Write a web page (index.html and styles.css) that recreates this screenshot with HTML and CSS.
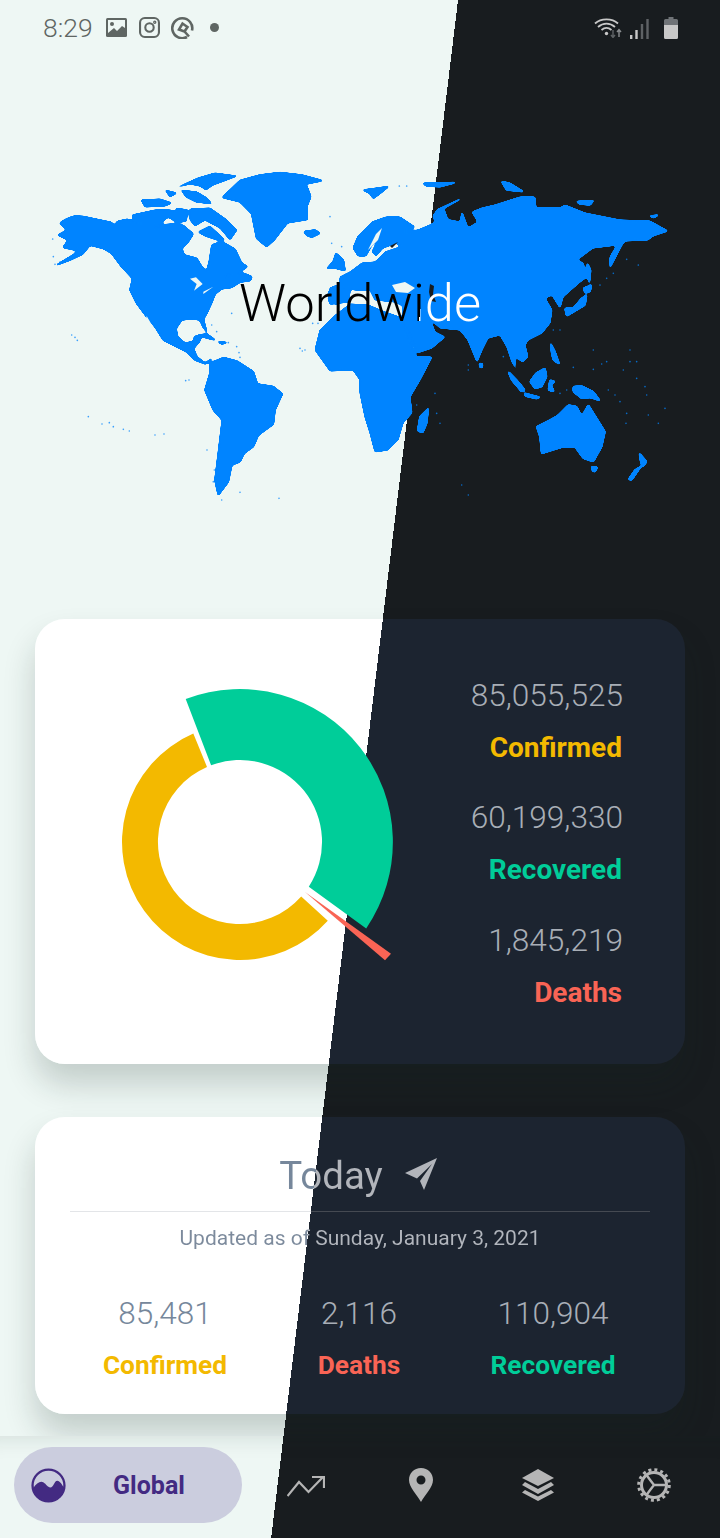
FILE: index.html
```html
<!DOCTYPE html>
<html lang="en">
<head>
<meta charset="utf-8">
<title>Worldwide</title>
<link rel="stylesheet" href="styles.css">
</head>
<body>
<div class="page">
  <header class="status">
    <span class="time">8:29</span>
    <svg class="st-img" viewBox="0 0 21 19"><rect width="21" height="19" rx="1.5" fill="#5f6663"/><path d="M2 2h17v8l-3-2-5 5-3-3-6 5z" fill="#eef7f4"/><circle cx="6" cy="6" r="2" fill="#5f6663"/></svg>
    <svg class="st-ig" viewBox="0 0 20 20" fill="none" stroke="#5f6663" stroke-width="2"><rect x="1" y="1" width="18" height="18" rx="4.5"/><circle cx="10" cy="10" r="4"/><circle cx="15" cy="5" r=".6"/></svg>
    <svg class="st-q" viewBox="0 0 23 23" fill="none" stroke="#5f6663"><path d="M16 21 A10 10 0 1 1 21 14.500" stroke-width="2.600"/><path d="M13.500 15.500 L8 13.500 L11.500 7.500 L16.500 11 L13.500 15.500 L18 20.500" stroke-width="2.600"/></svg>
    <span class="st-dot"></span>
    <span class="st-gap"></span>
    <svg class="st-wifi" viewBox="0 0 29 21" fill="none"><path d="M1 6.500 C7 1 18 1 24 6.500 M4 10 C9 5.500 16 5.500 21 10 M7.500 13 C10.500 10.500 14.500 10.500 17.500 13" stroke="#c8c8c8" stroke-width="1.800"/><circle cx="12.500" cy="16.500" r="1.700" fill="#c8c8c8"/><path d="M19 13v7m-2-2 2 2.500 2-2.500" stroke="#5e6265" stroke-width="1.400"/><path d="M25 20v-7m-2 2 2-2.500 2 2.500" stroke="#8a8d90" stroke-width="1.400"/></svg>
    <svg class="st-sig" viewBox="0 0 19 20" fill="#c8c8c8"><rect x="0" y="16" width="2.400" height="4"/><rect x="5.300" y="11" width="2.400" height="9"/><rect x="10.800" y="5" width="2.400" height="15" fill="#5e6265"/><rect x="16.300" y="0" width="2.400" height="20" fill="#5e6265"/></svg>
    <svg class="st-bat" viewBox="0 0 14 22"><path d="M4.500 0h5v2h3a1.500 1.500 0 0 1 1.500 1.500V8H0V3.500A1.500 1.500 0 0 1 1.500 2h3z" fill="#6f7377"/><path d="M0 8h14v12.500a1.500 1.500 0 0 1-1.500 1.500h-11A1.500 1.500 0 0 1 0 20.500z" fill="#c8c8c8"/></svg>
  </header>

  <section class="hero">
    <svg class="map" viewBox="30 160 660 350" fill="#0084ff" stroke="#0084ff" stroke-linejoin="round" stroke-width="1">
      <defs>
        <filter id="smooth" x="30" y="160" width="660" height="350" filterUnits="userSpaceOnUse" color-interpolation-filters="sRGB">
          <feGaussianBlur stdDeviation="1.2"/>
          <feComponentTransfer><feFuncA type="linear" slope="9" intercept="-3.400"/></feComponentTransfer>
        </filter>
      </defs>
      <g filter="url(#smooth)">
        <!-- americas and greenland, traced at 3x -->
        <g transform="translate(40 160) scale(.33333)" stroke-width="5">
          <path d="M60 190 Q75 176 105 168 L130 170 L165 177 L215 188 L222 200 L232 185 L262 178 L300 192 L330 192 L350 205 L365 195 L400 192 L430 197 L459 222 L445 245 L425 265 L432 285 L470 295 L485 320 L500 336 L508 305 L516 255 L545 245 L585 268 L605 310 L622 320 L600 335 L555 345 L550 360 L575 345 L610 340 L636 350 L630 362 L600 366 L575 382 L545 386 L525 402 L515 428 L500 460 L490 478 L500 515 L490 502 L480 480 L455 475 L425 480 L408 505 L412 530 L435 550 L460 545 L464 530 L485 525 L478 545 L460 565 L470 590 L495 610 L515 596 L497 612 L465 600 L440 575 L410 560 L370 540 L345 500 L320 470 L290 430 L270 390 L278 355 L245 320 L215 280 L190 265 L150 255 L128 282 L90 300 L50 315 L100 285 L125 262 L105 270 L70 262 L85 240 L55 225 L82 210Z"/>
          <path d="M510 610 L550 593 L590 603 L640 635 L652 672 L700 680 L727 702 L705 750 L700 792 L655 825 L640 860 L612 880 L600 905 L575 915 L565 965 L535 1005 L525 960 L535 880 L547 780 L520 750 L495 690 L510 640Z"/>
          <path d="M548 112 L600 62 L660 45 L720 38 L785 45 L846 62 L805 70 L740 70 L800 78 L812 110 L800 140 L802 178 L742 188 L702 240 L680 260 L650 235 L635 160 L600 125Z"/>
          <path d="M792 215 L825 210 L840 220 L815 232 L800 226Z M888 280 L910 300 L915 332 L880 322 L862 325 L880 305Z"/>
          <path d="M477 525 L500 522 L525 540 L495 532Z M535 545 L560 548 L545 552Z M880 390 L930 388 L925 425 L870 432 L865 398Z"/>
        </g>
        <!-- canadian arctic, page coordinates -->
        <path d="M178 187 L198 178 L215 173 L237 176 L224 181 L213 185 L206 190 L200 186 L190 184Z M181 190 L197 192 L207 198 L212 204 L196 202 L186 197Z M141 200 L160 199 L172 203 L165 206 L145 207Z M165 190 L177 193 L170 197Z M132 215 L155 210 L170 210 L178 212 L183 222 L176 222 L168 217 L160 225 L150 226 L134 222Z M190 209 L210 208 L227 220 L237 230 L230 240 L220 228 L205 220 L195 226 L190 220Z M176 208 L188 210 L186 222 L178 218Z M198 232 L210 226 L225 240 L217 240 L205 236Z"/>
        <!-- europe, africa, asia, page coordinates -->
        <path d="M328 300 L330 288 L340 284 L340 277 L350 272 L362 263 L375 262 L385 252 L400 247 L397 243 L383 248 L376 256 L372 252 L378 240 L387 232 L382 233 L372 245 L366 256 L358 256 L353 248 L358 236 L372 222 L386 217 L400 217 L415 227 L405 232 L418 230 L430 225 L435 222 L433 215 L440 218 L460 222 L462 212 L468 228 L478 222 L472 212 L482 208 L495 205 L520 197 L535 197 L536 208 L560 208 L565 205 L585 213 L595 215 L620 220 L650 221 L668 231 L653 236 L648 240 L625 241 L622 245 L610 268 L610 257 L617 245 L593 248 L577 260 L583 263 L587 277 L580 282 L563 297 L560 308 L552 295 L545 298 L552 310 L550 323 L542 333 L528 340 L525 345 L528 357 L523 362 L515 357 L515 367 L521 377 L512 362 L507 347 L500 335 L488 338 L482 350 L477 362 L468 340 L460 330 L440 328 L430 319 L435 332 L445 337 L432 348 L417 353 L410 335 L402 320 L413 350 L417 357 L432 357 L420 380 L410 397 L412 413 L403 423 L398 440 L388 450 L375 452 L370 433 L365 417 L360 393 L360 380 L353 370 L330 371 L315 350 L320 330 L333 317 L350 304 L368 305 L385 312 L402 318 L403 306 L395 302 L375 300 L370 290 L355 290 L345 288 L340 297 L338 305Z"/>
        <g transform="translate(360 160) scale(.33333)" stroke-width="5">
          <path d="M220 170 L232 150 L300 118 L250 145 L262 178 L232 185Z"/>
          <path d="M615 445 L620 468 L675 435 L680 405 L665 415 L640 445Z M670 385 L695 375 L690 395 L675 397Z M682 310 L692 330 L688 368 L682 345Z"/>
          <path d="M510 665 L528 640 L555 625 L560 650 L545 680 L525 685Z M445 635 L470 660 L495 690 L485 695 L455 660Z M495 700 L540 712 L530 716 L495 708Z M570 660 L585 665 L572 672 L582 695 L565 690Z M640 680 L665 678 L700 695 L720 722 L690 712 L665 715 L640 695Z M572 550 L585 575 L598 612 L580 600 L575 580Z"/>
          <path d="M530 800 L570 780 L592 768 L625 735 L650 740 L665 770 L685 735 L735 815 L725 860 L700 905 L670 895 L645 860 L610 860 L545 880 L540 830Z"/>
          <path d="M695 920 L712 922 L705 936 L697 932Z M838 880 L860 905 L848 920 L842 905Z M842 920 L815 960 L806 958 L825 930Z"/>
          <path d="M205 745 L200 790 L188 818 L173 812 L180 770Z M358 610 L368 612 L366 623 L360 622Z"/>
          <path d="M10 90 L50 85 L85 80 L60 100 L40 115 L30 100Z M190 70 L285 68 L240 80 L200 78Z M425 65 L450 70 L490 95 L440 90Z M650 125 L700 122 L690 135 L660 132Z M870 168 L895 165 L880 173Z"/>
        </g>
      </g>
      <!-- lakes and inland seas sit on top of the land -->
      <g transform="translate(40 160) scale(.33333)" fill="#eef7f4" stroke="none">
        <path d="M320 468 L350 520 L338 512 L318 478Z M468 352 L488 372 L462 392 L470 372 L450 356Z M490 395 L520 380 L490 402Z"/>
      </g>
      <path d="M392 285 L405 282 L415 288 L408 293 L396 292Z M376 234 L382 228 L378 240 L368 250Z" fill="#eef7f4" stroke="none"/>
      <path d="M430 284 L434 286 L433 294 L436 302 L431 301 L429 292Z M390 246 L398 242 L392 248Z" fill="#181c1f" stroke="none"/>
      <!-- tiny islands stay unfiltered -->
      <g transform="translate(40 160) scale(.33333)" fill="none" stroke-linecap="round" stroke-width="5" opacity=".75">
        <path d="M95 525h.01M105 532h.01M112 541h.01M145 770h.01M186 792h.01M208 788h.01M220 800h.01M250 808h.01M268 813h.01M345 825h.01M372 822h.01M437 662h.01M447 660h.01M501 870h.01M780 565h.01M795 570h.01M787 573h.01M818 490h.01M834 490h.01M45 313h.01M60 306h.01M80 298h.01M40 290h.01M515 495h.01M530 515h.01M565 548h.01M590 560h.01M597 578h.01M600 592h.01M523 930h.01M520 965h.01M545 1020h.01M600 997h.01M717 1015h.01M38 237h.01M575 460h.01M870 170h.01M875 250h.01M905 260h.01"/>
      </g>
      <g transform="translate(360 160) scale(.33333)" fill="none" stroke-linecap="round" stroke-width="5" opacity=".75">
        <path d="M640 622h.01M700 628h.01M740 605h.01M725 612h.01M810 570h.01M830 605h.01M790 630h.01M830 655h.01M855 680h.01M860 705h.01M780 725h.01M765 705h.01M745 690h.01M800 760h.01M865 765h.01M895 790h.01M915 745h.01M305 975h.01M325 1005h.01M430 590h.01M325 615h.01M325 630h.01M240 790h.01M230 760h.01M225 700h.01M170 735h.01M600 510h.01M580 510h.01M700 570h.01M810 605h.01M620 690h.01M600 700h.01M760 340h.01M740 355h.01M720 375h.01M800 298h.01M835 315h.01M798 790h.01M118 78h.01M140 78h.01"/>
      </g>
    </svg>
    <h1 class="title">Worldwide</h1>
  </section>

  <section class="card totals">
    <svg class="donut" viewBox="-120 -160 320 320">
      <path d="M87.800 78.800 A118 118 0 1 1 -46.700 -108.400 L-33 -75.100 A82 82 0 1 0 61.200 54.500Z" fill="#f3b900"/>
      <path d="M-54.300 -143 A153 153 0 0 1 126.200 86.400 L68.800 44.700 A82 82 0 0 0 -28.900 -76.700Z" fill="#00cd99"/>
      <path d="M65 50 L151 111.700 L145 118.300Z" fill="#f96455"/>
    </svg>
    <div class="stats">
      <p class="num">85,055,525</p><p class="lab yellow">Confirmed</p>
      <p class="num">60,199,330</p><p class="lab green">Recovered</p>
      <p class="num">1,845,219</p><p class="lab red">Deaths</p>
    </div>
  </section>

  <section class="card today">
    <div class="today-head">
      <h2 class="today-title">Today</h2>
      <svg class="plane" viewBox="0 0 34 34" fill="#b2b5bb"><path d="M33 1 L1 16 L13 21.500 L28 7 L16 24 L20 33Z"/></svg>
    </div>
    <div class="rule"></div>
    <p class="updated">Updated as of Sunday, January 3, 2021</p>
    <div class="cols">
      <div class="col"><p class="cnum slate">85,481</p><p class="clab yellow">Confirmed</p></div>
      <div class="col"><p class="cnum">2,116</p><p class="clab red">Deaths</p></div>
      <div class="col"><p class="cnum">110,904</p><p class="clab green">Recovered</p></div>
    </div>
  </section>

  <nav class="nav">
    <div class="pill">
      <svg class="globe" viewBox="0 0 36 36"><circle cx="18" cy="18" r="16.400" fill="none" stroke="#432a82" stroke-width="2.400"/><path d="M2 21 C6 15 10 13 13 15 C15.500 16.500 17 20 20 20 C23 20 24 13 27 13 C30 13 31.500 17 34 20 C33.500 28 26 34 18 34 C10 34 3 28 2 21Z" fill="#432a82"/></svg>
      <span class="pill-text">Global</span>
    </div>
    <div class="nav-item"><svg class="ni-trend" viewBox="0 0 38 21" fill="none" stroke="#b5b5b5" stroke-width="2.200"><path d="M0.500 20 L12 6 L21.500 16 L36 1 M25 1 H37 V12"/></svg></div>
    <div class="nav-item"><svg class="ni-pin" viewBox="0 0 24 34"><path fill-rule="evenodd" d="M12 0 C19 0 24 5 24 12 C24 19 16 27 12 34 C8 27 0 19 0 12 C0 5 5 0 12 0Z M12 7.500 A4.500 4.500 0 1 0 12 16.500 A4.500 4.500 0 1 0 12 7.500Z" fill="#b5b5b5"/></svg></div>
    <div class="nav-item"><svg class="ni-layers" viewBox="0 0 32 32" fill="#b5b5b5"><path d="M16 0 L32 9 L16 17 L0 9Z"/><path d="M3 13 L16 20 L29 13 L32 16 L16 25 L0 16Z"/><path d="M3 21 L16 27.500 L29 21 L32 23.500 L16 32 L0 23.500Z"/></svg></div>
    <div class="nav-item"><svg class="ni-gear" viewBox="0 0 34 34" fill="none" stroke="#b5b5b5"><circle cx="17" cy="17" r="12.500" stroke-width="3"/><circle cx="17" cy="17" r="15.300" stroke-width="3" stroke-dasharray="3 3"/><path d="M17 17 Q13 12 9.500 7 M17 17 H30 M17 17 Q13 22 9.500 27" stroke-width="2.400"/></svg></div>
  </nav>
</div>
</body>
</html>
```

FILE: styles.css
```css
* { box-sizing: border-box; margin: 0; padding: 0; }

html, body { height: 100%; }

body {
  width: 720px;
  overflow: hidden;
  font-family: Roboto, "Liberation Sans", sans-serif;
  background: linear-gradient(96.93deg, #eef7f4 454.7px, #181c1f 454.7px) fixed;
}

.page {
  display: flex;
  flex-direction: column;
  height: 1538px;
}

/* status bar */
.status {
  display: flex;
  align-items: center;
  height: 55px;
  padding: 0 41px 0 43px;
}
.time { font-size: 26.5px; font-weight: 300; color: #5f6663; width: 50px; margin-right: 13px; white-space: nowrap; }
.st-img { width: 21px; height: 19px; margin-right: 12px; }
.st-ig { width: 21px; height: 21px; margin-right: 11px; }
.st-q { width: 23px; height: 23px; margin-right: 16px; }
.st-dot { width: 9px; height: 9px; border-radius: 50%; background: #5f6663; }
.st-gap { flex: 1; }
.st-wifi { width: 29px; height: 21px; margin-right: 7px; }
.st-sig { width: 19px; height: 20px; margin-right: 15px; margin-top: 3px; }
.st-bat { width: 14px; height: 22px; margin-right: 1px; }

/* hero */
.hero {
  position: relative;
  height: 564px;
  padding: 105px 30px 0;
}
.map { display: block; width: 660px; height: 350px; }
.title {
  position: absolute;
  left: 0;
  right: 0;
  top: 215px;
  text-align: center;
  font-size: 52.5px;
  line-height: 66px;
  font-weight: 300;
  background: linear-gradient(96.93deg, #000 454.7px, #fff 454.7px) fixed;
  -webkit-background-clip: text;
  background-clip: text;
  color: transparent;
}

/* cards */
.card {
  margin: 0 35px;
  border-radius: 30px;
  background: linear-gradient(96.93deg, #fff 454.7px, #1c2430 454.7px) fixed;
  box-shadow: 0 20px 32px rgba(20, 40, 35, .2);
  position: relative;
}
.totals {
  display: flex;
  align-items: center;
  justify-content: space-between;
  height: 445px;
  padding: 0 62px 0 85px;
}
.donut { display: block; width: 320px; height: 320px; overflow: visible; }
.stats { text-align: right; margin-top: 5px; }
.num { font-size: 31.6px; line-height: 36px; font-weight: 300; color: #a8aeb6; margin-top: 34.5px; }
.num:first-child { margin-top: 0; }
.lab { font-size: 28px; line-height: 36px; font-weight: 700; margin-top: 16px; padding-right: 1px; }

.yellow { color: #f3b900; }
.green { color: #00cd99; }
.red { color: #f96455; }

.today { margin-top: 53px; height: 297px; padding: 0 35px; }
.today-head {
  display: flex;
  align-items: center;
  justify-content: center;
  gap: 21px;
  height: 94px;
  padding: 24px 3px 0 0;
}
.today-title {
  font-size: 38.5px;
  font-weight: 400;
  line-height: 46px;
  background: linear-gradient(96.93deg, #76879b 454.7px, #b2b5bb 454.7px) fixed;
  -webkit-background-clip: text;
  background-clip: text;
  color: transparent;
}
.plane { width: 34px; height: 34px; margin-top: -4px; }
.rule {
  height: 1px;
  background: linear-gradient(96.93deg, #e3e5e8 454.7px, #454a52 454.7px) fixed;
}
.updated {
  margin-top: 14px;
  text-align: center;
  font-size: 21px;
  line-height: 24px;
  background: linear-gradient(96.93deg, #7c8a9c 454.7px, #b2b6bd 454.7px) fixed;
  -webkit-background-clip: text;
  background-clip: text;
  color: transparent;
}
.cols {
  display: grid;
  grid-template-columns: repeat(3, 194px);
  justify-content: center;
  margin-top: 46px;
  padding-right: 2px;
  text-align: center;
}
.cnum { font-size: 31.5px; line-height: 36px; font-weight: 300; color: #a8aeb6; }
.cnum.slate { color: #76879b; }
.clab { font-size: 26.3px; line-height: 32px; font-weight: 700; margin-top: 17px; }

/* bottom nav */
.nav {
  margin-top: 22px;
  flex: 1;
  display: flex;
  align-items: flex-start;
  padding: 11px 0 0 14px;
  background: linear-gradient(96.93deg, #eef7f4 454.7px, #181c1f 454.7px) fixed;
  box-shadow: inset 0 24px 22px -22px rgba(20, 40, 35, .12);
  position: relative;
}
.pill {
  display: flex;
  align-items: center;
  width: 228px;
  height: 76px;
  border-radius: 38px;
  background: #cbcdde;
  padding-left: 17px;
  margin-right: 6px;
}
.globe { width: 35px; height: 35px; }
.pill-text {
  flex: 1;
  text-align: center;
  font-size: 25px;
  font-weight: 700;
  color: #432a82;
  padding-right: 10px;
}
.nav-item {
  width: 116px;
  height: 76px;
  display: flex;
  align-items: center;
  justify-content: center;
}
.ni-trend { width: 38px; height: 21px; margin-top: 3px; }
.ni-pin { width: 24px; height: 34px; margin-right: 2px; }
.ni-layers { width: 32px; height: 32px; margin-right: 1px; }
.ni-gear { width: 34px; height: 34px; }
```
